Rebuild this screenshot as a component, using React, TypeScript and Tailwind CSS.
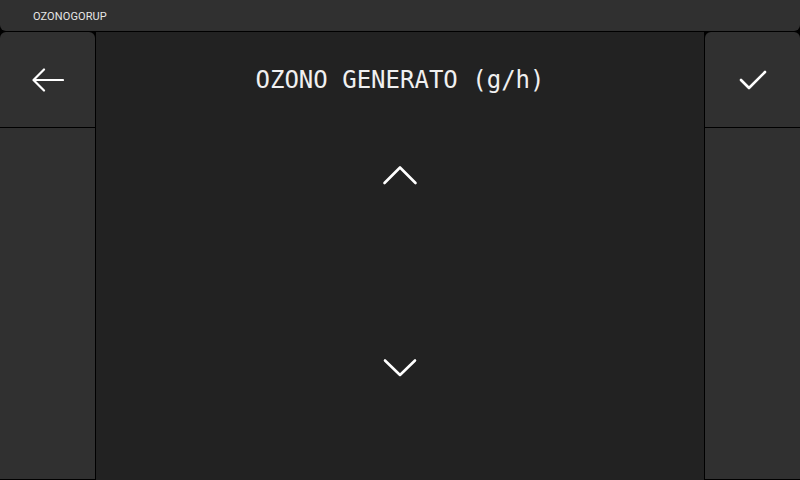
import React from 'react';

const SidePanel: React.FC<{ children: React.ReactNode }> = ({ children }) => (
  <div className="w-[95px] flex flex-col gap-px pb-px">
    <button className="h-[95px] bg-[#303030] rounded-t-[6px] flex items-center justify-center text-white">
      {children}
    </button>
    <div className="flex-1 bg-[#303030]" />
  </div>
);

const App: React.FC = () => {
  return (
    <div className="w-[800px] h-[480px] bg-black flex flex-col overflow-hidden">
      {/* Top bar */}
      <div className="h-[31px] bg-[#303030] rounded-b-[6px] flex items-center pl-[33px] pt-[3px]">
        <span className="text-[11px] text-[#e6e6e6] tracking-[0.1px]" style={{ fontFamily: 'Roboto, sans-serif' }}>
          OZONOGORUP
        </span>
      </div>

      <div className="flex-1 flex gap-px mt-px">
        {/* Back */}
        <SidePanel>
          <svg width="32" height="24" viewBox="0 0 32 24" fill="none" stroke="currentColor" strokeWidth="2.2" strokeLinecap="round" strokeLinejoin="round">
            <path d="M2 12h29" />
            <path d="M12 1.5L1.5 12L12 22.5" />
          </svg>
        </SidePanel>

        {/* Center */}
        <div className="flex-1 bg-[#222222] flex flex-col items-center">
          <div className="h-[96px] flex items-center justify-center">
            <h1 className="text-[24px] text-[#f0f0f0] leading-none" style={{ fontFamily: '"DejaVu Sans Mono", "Liberation Mono", monospace' }}>
              OZONO GENERATO (g/h)
            </h1>
          </div>
          <button className="mt-[37px] text-white">
            <svg width="36" height="20" viewBox="0 0 36 20" fill="none" stroke="currentColor" strokeWidth="2.6" strokeLinecap="round" strokeLinejoin="round">
              <path d="M2.5 18L18 2.5L33.5 18" />
            </svg>
          </button>
          <button className="mt-[173px] text-white">
            <svg width="36" height="20" viewBox="0 0 36 20" fill="none" stroke="currentColor" strokeWidth="2.6" strokeLinecap="round" strokeLinejoin="round">
              <path d="M3 2.5L18 17L33 2.5" />
            </svg>
          </button>
        </div>

        {/* Confirm */}
        <SidePanel>
          <svg width="28" height="22" viewBox="0 0 28 22" fill="none" stroke="currentColor" strokeWidth="2.6" strokeLinecap="round" strokeLinejoin="round">
            <path d="M2 11L10 19L26 3" />
          </svg>
        </SidePanel>
      </div>
    </div>
  );
};

export default App;
